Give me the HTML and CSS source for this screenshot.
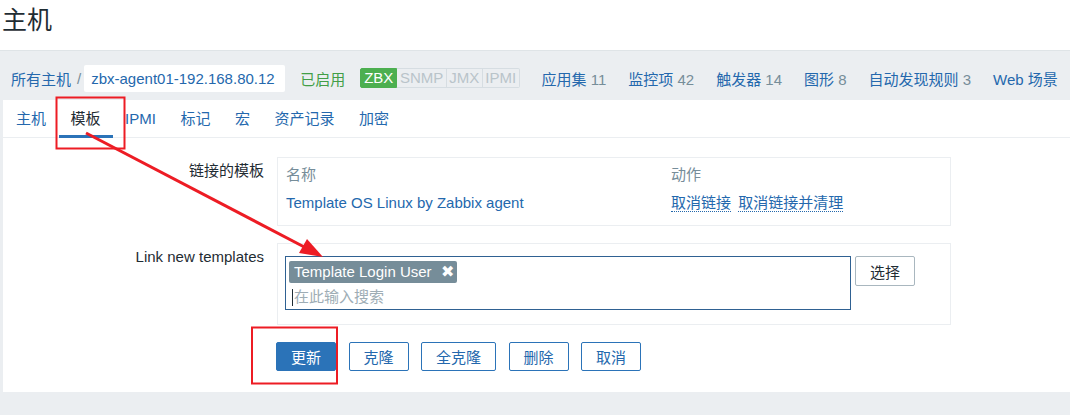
FILE: index.html
```html
<!DOCTYPE html>
<html lang="zh-CN">
<head>
    <meta charset="UTF-8">
    <title>主机</title>
    <link rel="stylesheet" href="styles.css">
</head>
<body>
    <header class="page-header">
        <h1 class="page-title">主机</h1>
    </header>

    <div class="host-nav">
        <span class="crumb">所有主机</span>
        <span class="crumb-sep">/</span>
        <span class="host-name">zbx-agent01-192.168.80.12</span>
        <span class="status-on">已启用</span>
        <span class="badges">
            <span class="badge badge-on">ZBX</span><span class="badge">SNMP</span><span class="badge">JMX</span><span class="badge">IPMI</span>
        </span>
        <a class="nav-link">应用集 <span class="count">11</span></a>
        <a class="nav-link">监控项 <span class="count">42</span></a>
        <a class="nav-link">触发器 <span class="count">14</span></a>
        <a class="nav-link">图形 <span class="count">8</span></a>
        <a class="nav-link">自动发现规则 <span class="count">3</span></a>
        <a class="nav-link">Web 场景</a>
    </div>

    <div class="content">
        <div class="panel">
            <ul class="tabs">
                <li>主机</li>
                <li class="active">模板</li>
                <li>IPMI</li>
                <li>标记</li>
                <li>宏</li>
                <li>资产记录</li>
                <li>加密</li>
            </ul>

            <div class="form">
                <div class="form-row">
                    <label class="form-label">链接的模板</label>
                    <div class="form-box linked">
                        <div class="linked-col name-col">
                            <div class="col-head">名称</div>
                            <a class="link">Template OS Linux by Zabbix agent</a>
                        </div>
                        <div class="linked-col">
                            <div class="col-head">动作</div>
                            <a class="link dotted">取消链接</a>
                            <a class="link dotted">取消链接并清理</a>
                        </div>
                    </div>
                </div>

                <div class="form-row">
                    <label class="form-label">Link new templates</label>
                    <div class="form-box new">
                        <div class="multiselect">
                            <span class="chip">Template Login User <span class="chip-x">&#10006;</span></span>
                            <div class="search"><span class="caret"></span>在此输入搜索</div>
                        </div>
                        <button class="btn-select">选择</button>
                    </div>
                </div>

                <div class="form-actions">
                    <button class="btn btn-primary">更新</button>
                    <button class="btn">克隆</button>
                    <button class="btn">全克隆</button>
                    <button class="btn">删除</button>
                    <button class="btn">取消</button>
                </div>
            </div>
        </div>
    </div>

    <!-- red annotations drawn over the page -->
    <svg class="marks" width="1070" height="415" viewBox="0 0 1070 415">
        <rect x="56.5" y="97.5" width="68" height="51" fill="none" stroke="#ed1c24" stroke-width="2"/>
        <rect x="252" y="327.5" width="85" height="56" fill="none" stroke="#ed1c24" stroke-width="2"/>
        <line x1="86" y1="133" x2="310" y2="250" stroke="#ed1c24" stroke-width="3"/>
        <polygon points="323,257 299,253 307,239" fill="#ed1c24"/>
    </svg>
</body>
</html>
```

FILE: styles.css
```css
* {
    margin: 0;
    padding: 0;
    box-sizing: border-box;
}

body {
    font-family: "Liberation Sans", "Noto Sans CJK SC", sans-serif;
    font-size: 15px;
    color: #1f2c33;
    background: #fff;
    width: 1070px;
    height: 415px;
    overflow: hidden;
    position: relative;
}

a {
    color: #2468ad;
    text-decoration: none;
}

.page-header {
    height: 50px;
    padding: 3px 0 0 2px;
}

.page-title {
    font-size: 25px;
    font-weight: normal;
    line-height: 34px;
}

.host-nav {
    height: 50px;
    background: #ebeef1;
    border-top: 1px solid #dfe4e7;
    display: flex;
    align-items: center;
    padding: 5px 0 0 11px;
    white-space: nowrap;
}

.crumb {
    color: #2468ad;
}

.crumb-sep {
    color: #768d99;
    margin: 0 3px 0 6px;
}

.host-name {
    background: #fff;
    color: #2468ad;
    border-radius: 2px;
    height: 27px;
    line-height: 27px;
    padding: 0 7px;
    width: 201px;
    flex: none;
}

.status-on {
    color: #429e47;
    margin-left: 15px;
}

.badges {
    display: flex;
    margin-left: 15px;
}

.badge {
    line-height: 18px;
    padding: 0 2.5px;
    border: 1px solid #d6dde2;
    border-left: none;
    color: #b9c4ca;
    background: #ebeef1;
}

.badge:last-child {
    border-radius: 0 2px 2px 0;
}

.badge-on {
    background: #4caf50;
    border: 1px solid #4caf50;
    color: #fff;
    border-radius: 2px 0 0 2px;
    padding: 0 3px;
}

.nav-link {
    margin-left: 22px;
}

.count {
    color: #768d99;
}

.content {
    background: #ebeef1;
    padding-left: 3px;
    height: 315px;
}

.panel {
    background: #fff;
    height: 292px;
}

.tabs {
    list-style: none;
    display: flex;
    height: 38px;
    border-bottom: 1px solid #ebeef1;
    padding-left: 1px;
}

.tabs li {
    padding: 0 12.5px 0 12px;
    line-height: 37px;
    color: #2468ad;
    position: relative;
}

.tabs li.active {
    color: #1f2c33;
}

.tabs li.active::after {
    content: "";
    position: absolute;
    left: 0;
    right: 0;
    bottom: -1px;
    height: 3px;
    background: #2b73b8;
}

.form {
    padding-top: 19px;
}

.form-row {
    display: flex;
    margin-bottom: 17px;
}

.form-label {
    width: 261px;
    text-align: right;
    line-height: 18px;
    padding-top: 5px;
}

.form-box {
    margin-left: 13px;
    width: 674px;
    border: 1px solid #ebeef1;
    display: flex;
}

.linked {
    height: 69px;
    padding: 8px 0 0 8px;
}

.name-col {
    width: 385px;
}

.col-head {
    color: #768d99;
    line-height: 18px;
    margin-bottom: 10px;
}

.linked .link {
    line-height: 18px;
}

.link.dotted {
    border-bottom: 1px dotted #2468ad;
    margin-right: 3px;
}

.new {
    height: 82px;
    padding: 12px 0 0 7px;
}

.multiselect {
    width: 566px;
    height: 54px;
    border: 1px solid #2f6192;
    padding: 3px 3px;
}

.chip {
    display: inline-block;
    background: #768d99;
    color: #fff;
    border-radius: 2px;
    height: 22px;
    line-height: 22px;
    padding: 0 5px;
    width: 168px;
    white-space: nowrap;
    margin-top: 1px;
}

.chip-x {
    font-size: 16px;
    margin-left: 5px;
}

.search {
    color: #9eadb5;
    line-height: 20px;
    margin-top: 4px;
    padding-left: 3px;
    display: flex;
    align-items: center;
}

.caret {
    display: inline-block;
    width: 1px;
    height: 17px;
    background: #1f2c33;
    margin-right: 1px;
}

.btn-select {
    margin-left: 4px;
    width: 60px;
    height: 30px;
    font: inherit;
    color: #1f2c33;
    background: #fff;
    border: 1px solid #a9b7bf;
    border-radius: 2px;
}

.form-actions {
    display: flex;
    gap: 12.5px;
    padding-left: 273px;
    margin-top: 1px;
}

.btn {
    font: inherit;
    height: 29px;
    min-width: 60px;
    padding: 0 14px;
    background: #fff;
    color: #2468ad;
    border: 1px solid #2b73b8;
    border-radius: 2px;
}

.btn-primary {
    background: #2b73b8;
    color: #fff;
}

.marks {
    position: absolute;
    left: 0;
    top: 0;
    pointer-events: none;
}
```
